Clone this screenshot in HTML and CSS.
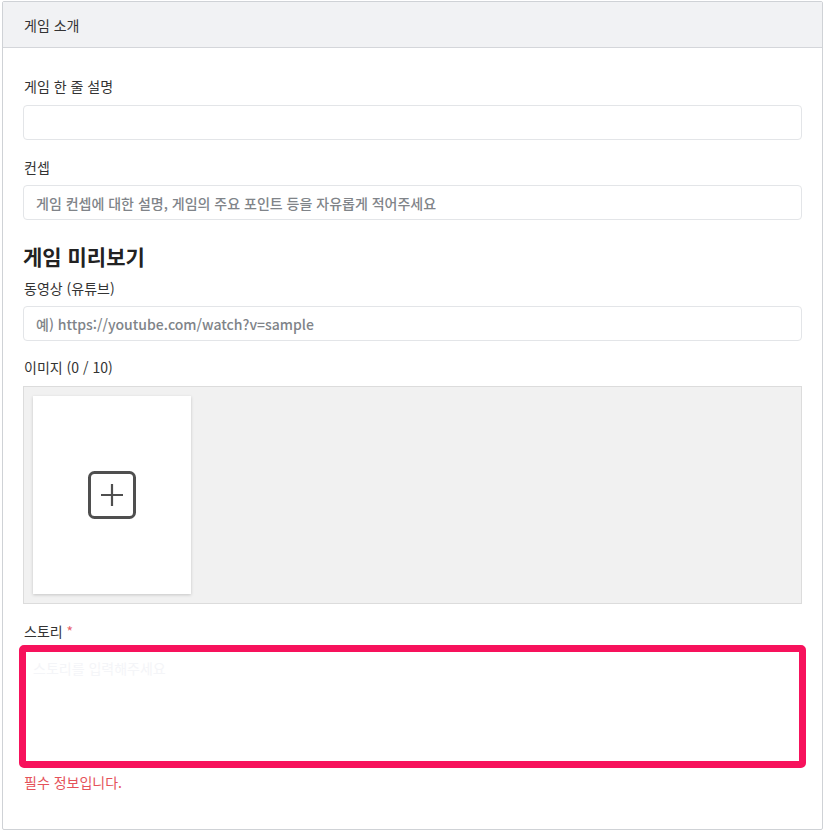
FILE: index.html
```html
<!DOCTYPE html>
<html lang="ko">
<head>
<meta charset="utf-8">
<title>게임 소개</title>
<link rel="stylesheet" href="styles.css">
</head>
<body>
<section class="card">
  <header class="card-header">게임 소개</header>
  <div class="card-body">
    <label class="label first">게임 한 줄 설명</label>
    <input class="input" type="text">

    <label class="label gap">컨셉</label>
    <input class="input" type="text" placeholder="게임 컨셉에 대한 설명, 게임의 주요 포인트 등을 자유롭게 적어주세요">

    <h2 class="section-title">게임 미리보기</h2>
    <label class="label">동영상 (유튜브)</label>
    <input class="input" type="text" placeholder="예) https://youtube.com/watch?v=sample">

    <label class="label gap images">이미지 (0 / 10)</label>
    <div class="image-area">
      <div class="image-add">
        <svg width="50" height="50" viewBox="0 0 50 50" aria-hidden="true">
          <rect x="2.5" y="2.5" width="45" height="45" rx="5" fill="none" stroke="#4f4f4f" stroke-width="3"/>
          <path d="M14 25h22M25 14v22" stroke="#4f4f4f" stroke-width="2.2" fill="none"/>
        </svg>
      </div>
    </div>

    <label class="label gap">스토리 <span class="req">*</span></label>
    <textarea class="textarea error" placeholder="스토리를 입력해주세요"></textarea>
    <p class="error-msg">필수 정보입니다.</p>
  </div>
</section>
</body>
</html>
```
FILE: styles.css
```css
* { box-sizing: border-box; }
html, body { margin: 0; padding: 0; background: #fff; }
body {
  font-family: "Noto Sans CJK KR", "Noto Sans", sans-serif;
  color: #333;
  font-size: 14px;
}
.card {
  margin: 1px 2px 1px 2px;
  border: 1px solid #cfd2d6;
  border-radius: 2px;
  background: #fff;
}
.card-header {
  height: 46px;
  background: #f1f2f4;
  border-bottom: 1px solid #d4d6da;
  padding: 0 21px;
  display: flex;
  align-items: center;
  font-size: 14px;
  line-height: 20px;
  color: #333;
}
.card-body {
  padding: 28px 20px 37px 20px;
  display: flex;
  flex-direction: column;
}
.label {
  display: block;
  font-size: 14px;
  line-height: 20px;
  margin: 0 0 8px 1px;
  color: #333;
}
.label.first { margin-bottom: 9px; }
.label.gap { margin-top: 17px; }
.label.images { margin-top: 16px; margin-bottom: 9px; }
.req { color: #e8606a; }
.input {
  height: 35px;
  width: 100%;
  border: 1px solid #e3e5e8;
  border-radius: 4px;
  padding: 0 12px;
  font-family: inherit;
  font-size: 14px;
  font-weight: 500;
  color: #333;
  background: #fff;
  outline: none;
}
.input::placeholder { color: #808489; }
.section-title {
  margin: 21px 0 7px 0;
  font-size: 21px;
  line-height: 30px;
  font-weight: 700;
  color: #222;
}
.image-area {
  height: 218px;
  background: #f1f1f1;
  border: 1px solid #dcdcdc;
  padding: 9px;
  display: flex;
  align-items: flex-start;
}
.image-add {
  width: 158px;
  height: 198px;
  background: #fff;
  box-shadow: 0 1px 3px rgba(0,0,0,0.18);
  display: flex;
  align-items: center;
  justify-content: center;
}
.textarea {
  margin: -4px -4px 0 -4px;
  height: 123px;
  border: 7px solid #f7125c;
  border-radius: 5px;
  padding: 6px 7px;
  resize: none;
  font-family: inherit;
  font-size: 14px;
  outline: none;
  background: #fff;
}
.textarea::placeholder { color: #f4f5f8; }
.error-msg {
  margin: 4px 0 0 1px;
  font-size: 14px;
  line-height: 20px;
  color: #e5525a;
}
```
